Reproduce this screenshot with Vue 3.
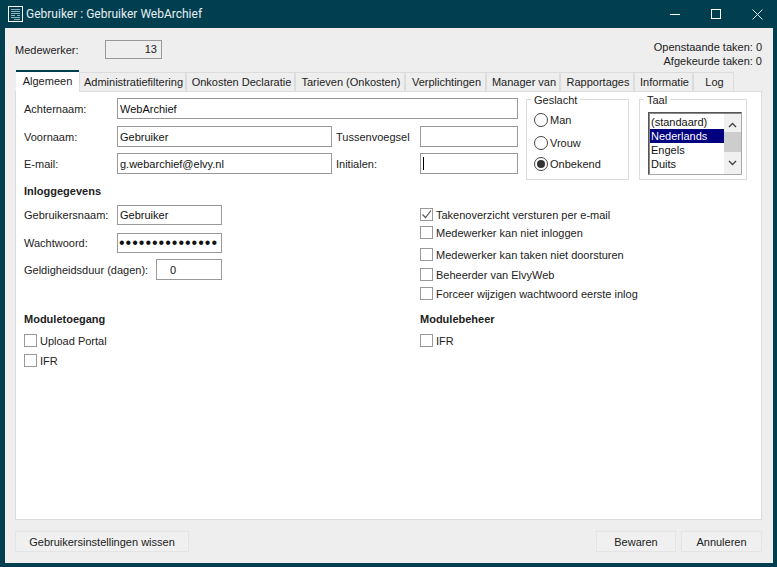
<template>
  <div class="window">
    <div class="titlebar">
      <svg class="app-icon" width="15" height="16" viewBox="0 0 15 16">
        <rect x="0.5" y="0.5" width="14" height="15" fill="none" stroke="#fff" />
        <path d="M3 3.5h9M3 5.5h9M3 7.5h9M3 9.5h4M9 9.5h3M3 11.5h9M6 13.5h6" stroke="#8fb4bd" fill="none" />
      </svg>
      <span class="title">Gebruiker : Gebruiker WebArchief</span>
      <div class="win-buttons">
        <svg width="10" height="10" viewBox="0 0 10 10"><path d="M0 5.5h10" stroke="#fff" /></svg>
        <svg width="10" height="10" viewBox="0 0 10 10"><rect x="0.5" y="0.5" width="9" height="9" fill="none" stroke="#fff" /></svg>
        <svg width="11" height="11" viewBox="0 0 11 11"><path d="M0.5 0.5l10 10M10.5 0.5l-10 10" stroke="#dfe8ea" /></svg>
      </div>
    </div>

    <div class="client">
      <div class="head">
        <div class="employee">
          <label class="employee-label">Medewerker:</label>
          <div class="employee-box">13</div>
        </div>
        <div class="counters">
          <div>Openstaande taken: 0</div>
          <div>Afgekeurde taken: 0</div>
        </div>
      </div>

      <div class="tabs">
        <div
          v-for="tab in tabs"
          :key="tab.name"
          class="tab"
          :class="{ active: tab.active }"
          :style="{ width: tab.width + 'px' }"
        >{{ tab.name }}</div>
      </div>

      <div class="panel">
        <div class="top">
          <div class="fields">
            <div class="row row-name">
              <label class="lbl">Achternaam:</label>
              <input class="inp grow" value="WebArchief" />
            </div>
            <div class="row row-first">
              <label class="lbl">Voornaam:</label>
              <input class="inp mid" value="Gebruiker" />
              <label class="lbl-2">Tussenvoegsel</label>
              <input class="inp small" />
            </div>
            <div class="row row-mail">
              <label class="lbl">E-mail:</label>
              <input class="inp mid" value="g.webarchief@elvy.nl" />
              <label class="lbl-2">Initialen:</label>
              <div class="caret-wrap">
                <input class="inp small" />
                <span class="caret"></span>
              </div>
            </div>
          </div>

          <fieldset class="group gender">
            <legend>Geslacht</legend>
            <div v-for="g in genders" :key="g.name" class="radio" :class="g.cls">
              <span class="dot" :class="{ on: g.on }"></span>{{ g.name }}
            </div>
          </fieldset>

          <fieldset class="group lang">
            <legend>Taal</legend>
            <div class="listbox">
              <div class="items">
                <div v-for="l in languages" :key="l" class="item" :class="{ sel: l === 'Nederlands' }">{{ l }}</div>
              </div>
              <div class="scroll">
                <svg width="9" height="6" viewBox="0 0 9 6"><path d="M1 5l3.5-3.5L8 5" fill="none" stroke="#444" stroke-width="1.4" /></svg>
                <div class="thumb"></div>
                <svg class="down" width="9" height="6" viewBox="0 0 9 6"><path d="M1 1l3.5 3.5L8 1" fill="none" stroke="#444" stroke-width="1.4" /></svg>
              </div>
            </div>
          </fieldset>
        </div>

        <div class="columns login">
          <div class="col-left">
            <h4>Inloggegevens</h4>
            <div class="row row-user">
              <label class="lbl">Gebruikersnaam:</label>
              <input class="inp login-inp" value="Gebruiker" />
            </div>
            <div class="row row-pass">
              <label class="lbl">Wachtwoord:</label>
              <input class="inp login-inp pass" type="password" value="123456789012345" />
            </div>
            <div class="row row-valid">
              <label class="lbl lbl-wide">Geldigheidsduur (dagen):</label>
              <input class="inp valid-inp" value="0" />
            </div>
          </div>
          <div class="col-right checks">
            <div v-for="c in options" :key="c.name" class="check" :class="c.cls">
              <span class="box">
                <svg v-if="c.on" width="11" height="11" viewBox="0 0 11 11"><path d="M1.5 5.5l3 3 5.5-7" fill="none" stroke="#555" stroke-width="1.2" /></svg>
              </span>{{ c.name }}
            </div>
          </div>
        </div>

        <div class="columns modules">
          <div class="col-left">
            <h4>Moduletoegang</h4>
            <div class="check mod-first"><span class="box"></span>Upload Portal</div>
            <div class="check mod-next"><span class="box"></span>IFR</div>
          </div>
          <div class="col-right">
            <h4>Modulebeheer</h4>
            <div class="check mod-first"><span class="box"></span>IFR</div>
          </div>
        </div>
      </div>

      <div class="footer">
        <button class="btn reset">Gebruikersinstellingen wissen</button>
        <div class="footer-right">
          <button class="btn save">Bewaren</button>
          <button class="btn cancel">Annuleren</button>
        </div>
      </div>
    </div>
  </div>
</template>

<script setup>
const tabs = [
  { name: 'Algemeen', width: 63, active: true },
  { name: 'Administratiefiltering', width: 107 },
  { name: 'Onkosten Declaratie', width: 109 },
  { name: 'Tarieven (Onkosten)', width: 110 },
  { name: 'Verplichtingen', width: 81 },
  { name: 'Manager van', width: 74 },
  { name: 'Rapportages', width: 74 },
  { name: 'Informatie', width: 59 },
  { name: 'Log', width: 41 }
]

const genders = [
  { name: 'Man', cls: 'r-man' },
  { name: 'Vrouw', cls: 'r-vrouw' },
  { name: 'Onbekend', cls: 'r-onb', on: true }
]

const languages = ['(standaard)', 'Nederlands', 'Engels', 'Duits']

const options = [
  { name: 'Takenoverzicht versturen per e-mail', on: true, cls: 'c1' },
  { name: 'Medewerker kan niet inloggen', cls: 'c2' },
  { name: 'Medewerker kan taken niet doorsturen', cls: 'c3' },
  { name: 'Beheerder van ElvyWeb', cls: 'c4' },
  { name: 'Forceer wijzigen wachtwoord eerste inlog', cls: 'c5' }
]
</script>

<style scoped>
.window {
  width: 777px;
  height: 567px;
  background: #013f50;
  display: flex;
  flex-direction: column;
  font-family: "Liberation Sans", Arial, sans-serif;
  font-size: 11px;
  color: #222;
  overflow: hidden;
}

.titlebar {
  height: 28px;
  flex: none;
  display: flex;
  align-items: center;
  padding-left: 8px;
  color: #e6eef0;
}

.app-icon {
  margin-right: 3px;
}

.title {
  font-family: Roboto, sans-serif;
  font-size: 12px;
}

.win-buttons {
  margin-left: auto;
  margin-right: 14px;
  display: flex;
  align-items: center;
  gap: 31px;
}

.client {
  flex: 1;
  margin: 0 4px 4px 5px;
  background: #eeeeee;
  padding: 0 11px 0 10px;
  display: flex;
  flex-direction: column;
}

.head {
  height: 42px;
  display: flex;
  justify-content: space-between;
}

.employee {
  display: flex;
  align-items: center;
  height: 19px;
  margin-top: 12px;
}

.employee-label {
  width: 90px;
}

.employee-box {
  width: 51px;
  height: 17px;
  line-height: 17px;
  text-align: right;
  padding-right: 4px;
  border: 1px solid #999;
}

.counters {
  margin-top: 12px;
  text-align: right;
  line-height: 14px;
}

.tabs {
  display: flex;
  height: 21px;
  align-items: flex-end;
  padding-left: 1px;
  position: relative;
  z-index: 1;
}

.tab {
  height: 19px;
  line-height: 18px;
  text-align: center;
  padding-left: 2px;
  border: 1px solid #dcdcdc;
  border-bottom: none;
  box-sizing: border-box;
  background: #eee;
}

.tab.active {
  height: 23px;
  margin-bottom: -2px;
  padding-left: 0;
  background: #fff;
  border: none;
  border-top: 2px solid #013f50;
  line-height: 19px;
}

.panel {
  height: 429px;
  background: #fff;
  border: 1px solid #dcdcdc;
  padding: 0 8px;
  box-sizing: border-box;
}

.top {
  display: flex;
  height: 92px;
}

.fields {
  width: 494px;
  padding-top: 6px;
}

.row {
  display: flex;
  align-items: center;
}

.row-first {
  margin-top: 7px;
}

.row-mail {
  margin-top: 6px;
}

.lbl {
  width: 93px;
  flex: none;
}

.lbl-wide {
  width: 132px;
}

.lbl-2 {
  width: 88px;
  padding-left: 4px;
  box-sizing: border-box;
  flex: none;
}

.inp {
  box-sizing: border-box;
  height: 21px;
  border: 1px solid #999;
  outline: none;
  margin: 0;
  padding: 0 2px;
  font: inherit;
  color: #111;
  background: #fff;
}

.grow {
  width: 401px;
}

.mid {
  width: 215px;
}

.small {
  width: 98px;
  display: block;
}

.caret-wrap {
  position: relative;
}

.caret {
  position: absolute;
  left: 3px;
  top: 4px;
  width: 1px;
  height: 13px;
  background: #000;
}

.group {
  box-sizing: border-box;
  border: 1px solid #dcdcdc;
  margin: 1px 0 0;
  padding: 0;
  height: 87px;
  position: relative;
}

.group legend {
  padding: 2px 3px 0;
  line-height: 10px;
  font-size: 11px;
}

.gender {
  width: 103px;
  margin-left: 8px;
  padding: 8px 0 0 7px;
}

.gender legend {
  margin-left: -3px;
}

.lang {
  width: 108px;
  margin-left: 10px;
  padding: 7px 0 0 8px;
}

.lang legend {
  margin-left: -4px;
}

.radio {
  display: flex;
  align-items: center;
  height: 14px;
}

.r-vrouw {
  margin-top: 9px;
}

.r-onb {
  margin-top: 7px;
}

.dot {
  width: 12px;
  height: 12px;
  border: 1px solid #444;
  border-radius: 50%;
  margin-right: 2px;
  background: #fff;
  position: relative;
  flex: none;
}

.dot.on::after {
  content: "";
  position: absolute;
  left: 2px;
  top: 2px;
  width: 8px;
  height: 8px;
  background: #333;
  border-radius: 50%;
}

.listbox {
  width: 94px;
  height: 63px;
  box-sizing: border-box;
  border: 1px solid #555;
  border-right-color: #aaa;
  border-bottom-color: #aaa;
  box-shadow: inset 1px 1px 0 #888;
  display: flex;
  padding: 1px 0 0 1px;
}

.items {
  flex: 1;
  padding-top: 1px;
}

.item {
  height: 14px;
  line-height: 14px;
  padding-left: 1px;
  color: #111;
}

.item.sel {
  background: #000080;
  color: #fff;
}

.scroll {
  width: 17px;
  background: #f0f0f0;
  display: flex;
  flex-direction: column;
  align-items: center;
  padding-top: 8px;
  box-sizing: border-box;
}

.thumb {
  width: 17px;
  height: 20px;
  margin-top: 4px;
  background: #cdcdcd;
}

.down {
  margin-top: 8px;
}

.columns {
  display: flex;
}

.col-left {
  width: 396px;
  flex: none;
}

h4 {
  margin: 0;
  font-size: 11px;
  font-weight: bold;
  line-height: 14px;
}

.login {
  height: 128px;
}

.row-user {
  margin-top: 7px;
}

.row-pass {
  margin-top: 8px;
}

.row-valid {
  margin-top: 6px;
}

.login-inp {
  width: 105px;
  height: 20px;
}

.pass {
  letter-spacing: 1px;
  font-size: 16px;
  padding: 0 1px;
}

.valid-inp {
  width: 66px;
  padding-left: 13px;
}

.check {
  display: flex;
  align-items: center;
  height: 13px;
}

.box {
  box-sizing: border-box;
  width: 13px;
  height: 13px;
  border: 1px solid #999;
  background: #fff;
  margin-right: 3px;
  flex: none;
  display: flex;
}

.checks {
  padding-top: 24px;
}

.c2 {
  margin-top: 5px;
}

.c3 {
  margin-top: 9px;
}

.c4 {
  margin-top: 7px;
}

.c5 {
  margin-top: 6px;
}

.mod-first {
  margin-top: 8px;
}

.mod-next {
  margin-top: 7px;
}

.footer {
  margin-top: 11px;
  display: flex;
  justify-content: space-between;
}

.footer-right {
  display: flex;
  gap: 5px;
}

.btn {
  height: 21px;
  margin: 0;
  padding: 0;
  font: inherit;
  color: #222;
  background: #f0f0f0;
  border: 1px solid #fff;
  border-right-color: #bbb;
  border-bottom-color: #bbb;
  outline: 1px solid #e4e4e4;
  outline-offset: -1px;
}

.reset {
  width: 174px;
}

.save {
  width: 80px;
}

.cancel {
  width: 81px;
}
</style>

<style>
html, body {
  margin: 0;
  background: #013f50;
}
</style>
